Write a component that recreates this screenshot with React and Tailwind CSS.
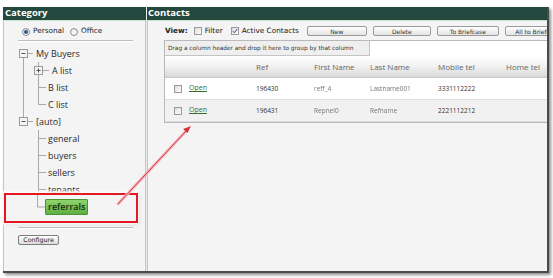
const LINE = "#a9a9a9";

function Box({ plus }) {
  return (
    <>
      <rect x="0.5" y="4.5" width="8" height="8" fill="#f3f3f3" stroke="#9a9a9a" />
      <line x1="2.5" y1="8.5" x2="6.5" y2="8.5" stroke="#555" />
      {plus && <line x1="4.5" y1="6.5" x2="4.5" y2="10.5" stroke="#555" />}
    </>
  );
}

function RootRow({ label, down, up }) {
  return (
    <div className="flex h-[17px] items-center">
      <svg width="16" height="17" className="shrink-0">
        {up && <line x1="4.5" y1="0" x2="4.5" y2="4" stroke={LINE} />}
        {down && <line x1="4.5" y1="13" x2="4.5" y2="17" stroke={LINE} />}
        <line x1="9" y1="8.5" x2="14" y2="8.5" stroke={LINE} />
        <Box />
      </svg>
      <span className="ml-px">{label}</span>
    </div>
  );
}

function ChildRow({ label, last, plus, highlight }) {
  return (
    <div className="flex h-[17px] items-center">
      <svg width={plus ? 18 : highlight ? 12 : 14} height="17" className="shrink-0">
        <line x1="4.5" y1="0" x2="4.5" y2={last ? 8.5 : 17} stroke={LINE} />
        {plus ? (
          <>
            <line x1="9" y1="8.5" x2="15" y2="8.5" stroke={LINE} />
            <Box plus />
          </>
        ) : (
          <line x1="4.5" y1="8.5" x2="12" y2="8.5" stroke={LINE} />
        )}
      </svg>
      {highlight ? <Referrals /> : <span>{label}</span>}
    </div>
  );
}

function Referrals() {
  return (
    <span className="flex h-[16px] items-center rounded-[1px] border border-[#4c9632] bg-gradient-to-b from-[#8ed46c] to-[#5fae43] px-[2px] font-semibold text-[#17320c]">
      referrals
    </span>
  );
}

function Radio({ on }) {
  return (
    <span className="flex h-[8px] w-[8px] items-center justify-center rounded-full border border-[#8a8a8a] bg-gradient-to-b from-[#e9e9e9] to-white">
      {on && <span className="h-[4px] w-[4px] rounded-full bg-[#2a5a8a]" />}
    </span>
  );
}

function Check({ on }) {
  return (
    <span className="flex h-[8px] w-[8px] items-center justify-center border border-[#9a9a9a] bg-gradient-to-br from-[#dcdcdc] to-white">
      {on && (
        <svg width="6" height="6" viewBox="0 0 6 6">
          <path d="M0.8 3.2 L2.4 4.8 L5.2 1" fill="none" stroke="#3a4a8a" strokeWidth="1" />
        </svg>
      )}
    </span>
  );
}

function Btn({ children, w }) {
  return (
    <span
      className={`flex h-[10px] ${w} shrink-0 items-center justify-center rounded-[2px] border border-[#9a9a9a] bg-gradient-to-b from-white to-[#e4e4e4] text-[6px] text-[#333]`}
    >
      {children}
    </span>
  );
}

const rows = [
  { ref: "196430", first: "reff_4", last: "Lastname001", mob: "3331112222", bg: "bg-white" },
  { ref: "196431", first: "Repnel0", last: "Refname", mob: "2221112212", bg: "bg-[#f1f1f1]" },
];

const gridCols = "grid grid-cols-[22px_66px_58px_56px_68px_68px_62px]";

export default function App() {
  return (
    <div className="relative h-[278px] w-[553px] overflow-hidden bg-white pl-[3px] pt-[7px] font-['Open_Sans',sans-serif]">
      <div className="flex h-[266px] w-[546px] border-b-2 border-r-2 border-[#4a4a4a] shadow-[2px_2px_3px_rgba(0,0,0,0.45)]">
        {/* Category */}
        <div className="flex w-[143px] flex-col">
          <div className="flex h-[14px] items-center border-b border-[#c9e2c9] bg-[#23483d] pl-[2px] text-[9.5px] font-bold text-white">
            Category
          </div>
          <div className="flex flex-1 flex-col border-l border-r border-[#c6c6c6] bg-[#f4f4f4]">
            <div className="mt-[5px] flex h-[11px] items-center pl-[18px] font-['DejaVu_Sans',sans-serif] text-[7.3px] text-[#222]">
              <Radio on />
              <span className="ml-[3px]">Personal</span>
              <span className="ml-[6px]"><Radio /></span>
              <span className="ml-[3px]">Office</span>
            </div>
            <div className="ml-[14px] mt-[3px] h-[2px] w-[115px] border-t border-[#bdbdbd] bg-white" />
            <div className="mt-[3px] pl-[15px] text-[9px] text-[#2b2b2b]">
              <RootRow label="My Buyers" down />
              <div className="ml-[4px] border-l border-[#a9a9a9] pl-[10px]">
                <ChildRow label="A list" plus />
                <ChildRow label="B list" />
                <ChildRow label="C list" last />
              </div>
              <RootRow label="[auto]" up />
              <div className="ml-[4px] border-l border-transparent pl-[10px]">
                <ChildRow label="general" />
                <ChildRow label="buyers" />
                <ChildRow label="sellers" />
                <ChildRow label="tenants" />
                <ChildRow highlight last />
              </div>
            </div>
            <div className="ml-[14px] mt-[12px] h-[2px] w-[115px] border-t border-[#bdbdbd] bg-white" />
            <div className="ml-[14px] mt-[6px]">
              <span className="flex h-[10px] w-[41px] items-center justify-center rounded-[2px] border border-[#7e7e7e] bg-gradient-to-b from-white to-[#dcdcdc] font-['DejaVu_Sans',sans-serif] text-[6.3px] text-[#222]">
                Configure
              </span>
            </div>
          </div>
        </div>

        <div className="w-px bg-[#e8e8e8]" />

        {/* Contacts */}
        <div className="flex min-w-0 flex-1 flex-col">
          <div className="flex h-[14px] items-center border-b border-[#c9e2c9] bg-[#23483d] pl-[1px] text-[9.5px] font-bold text-white">
            Contacts
          </div>
          <div className="flex flex-1 flex-col overflow-hidden border-l border-[#c6c6c6] bg-[#f4f4f4]">
            <div className="mt-[5px] flex h-[10px] items-center whitespace-nowrap pl-[17px] font-['DejaVu_Sans',sans-serif] text-[7.3px] text-[#222]">
              <span className="shrink-0 font-bold">View:</span>
              <span className="ml-[6px] shrink-0"><Check /></span>
              <span className="ml-[3px] shrink-0">Filter</span>
              <span className="ml-[8px] shrink-0"><Check on /></span>
              <span className="ml-[3px] shrink-0">Active Contacts</span>
              <div className="ml-[8px] flex shrink-0 gap-[6px]">
                <Btn w="w-[60px]">New</Btn>
                <Btn w="w-[58px]">Delete</Btn>
                <Btn w="w-[62px]">To Briefcase</Btn>
                <Btn w="w-[66px]">All to Briefcase</Btn>
              </div>
            </div>

            <div className="ml-[16px] mt-[4px] w-[400px] shrink-0 border border-[#b9b9b9] bg-white">
              <div className="flex h-[15px] w-[205px] items-center whitespace-nowrap border-b border-r border-[#c4c4c4] bg-[#efefef] pl-[3px] font-['DejaVu_Sans',sans-serif] text-[5.8px] text-[#333]">
                Drag a column header and drop it here to group by that column
              </div>
              <div className={`${gridCols} h-[22px] items-center whitespace-nowrap border-b border-[#c8c8c8] bg-gradient-to-b from-white via-[#f1f1f1] to-[#d9d9d9] text-[8px] text-[#666]`}>
                <span />
                <span />
                <span className="pl-[3px]">Ref</span>
                <span className="pl-[3px]">First Name</span>
                <span className="pl-[3px]">Last Name</span>
                <span className="pl-[3px]">Mobile tel</span>
                <span className="pl-[3px]">Home tel</span>
              </div>
              {rows.map((r) => (
                <div key={r.ref} className={`${gridCols} h-[22px] items-center whitespace-nowrap border-b border-[#dedede] ${r.bg} text-[6.5px] text-[#333]`}>
                  <span className="flex justify-center pl-[3px]"><Check /></span>
                  <span className="pl-[2px] text-[7px] text-[#3a6d2c] underline">Open</span>
                  <span className="pl-[3px]">{r.ref}</span>
                  <span className="pl-[3px] text-[#777] blur-[0.6px]">{r.first}</span>
                  <span className="pl-[3px] text-[#777] blur-[0.6px]">{r.last}</span>
                  <span className="pl-[3px]">{r.mob}</span>
                  <span />
                </div>
              ))}
            </div>
          </div>
        </div>
      </div>

      {/* annotation: highlighted copy of the node */}
      <div className="absolute left-[4px] top-[193px] h-[30px] w-[134px] border-2 border-[#e3191f] bg-[#f4f4f4] pl-[27px] text-[9px] shadow-[0_0_2px_2px_rgba(255,255,255,0.9),1px_1px_3px_rgba(0,0,0,0.35)]">
        <div className="flex items-start">
          <svg width="12" height="14" className="shrink-0">
            <line x1="4.5" y1="0" x2="4.5" y2="12" stroke={LINE} />
            <line x1="4.5" y1="12" x2="12" y2="12" stroke={LINE} />
          </svg>
          <div className="mt-[4px]"><Referrals /></div>
        </div>
      </div>

      {/* annotation arrow */}
      <svg className="pointer-events-none absolute left-0 top-0" width="553" height="278">
        <line x1="118" y1="204" x2="187" y2="130" stroke="#f3b6bd" strokeWidth="3" strokeLinecap="round" />
        <line x1="118" y1="204" x2="187" y2="130" stroke="#d8323e" strokeWidth="1" />
        <polygon points="191,126 187.5,133.1 183.1,129.1" fill="#d8323e" />
      </svg>
    </div>
  );
}
